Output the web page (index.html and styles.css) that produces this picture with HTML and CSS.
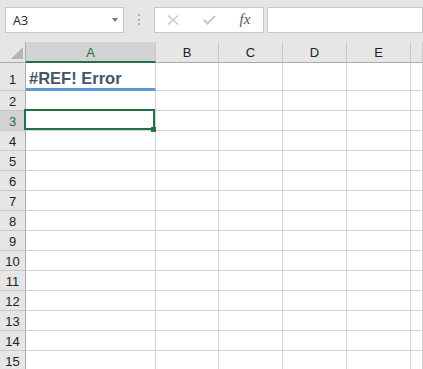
FILE: index.html
```html
<!DOCTYPE html>
<html lang="en">
<head>
    <meta charset="UTF-8">
    <meta name="viewport" content="width=device-width, initial-scale=1.0">
    <title>#REF! Error</title>
    <link rel="stylesheet" href="styles.css">
</head>
<body>

    <div class="toolbar">
        <div class="name-box">
            <span>A3</span>
            <span class="drop"></span>
        </div>
        <div class="grip"><i></i><i></i><i></i></div>
        <div class="fx-bar">
            <span class="fx-btn">
                <svg width="12" height="10" viewBox="0 0 12 10"><path d="M1 0.5 L11 9.5 M11 0.5 L1 9.5" stroke="#c3c3c3" stroke-width="1.2" fill="none"/></svg>
            </span>
            <span class="fx-btn">
                <svg width="13" height="10" viewBox="0 0 13 10"><path d="M1 5 L4.5 8.5 L12 1" stroke="#c6c6c6" stroke-width="2" fill="none"/></svg>
            </span>
            <span class="fx-btn fx">fx</span>
        </div>
        <div class="formula"></div>
    </div>

    <div class="sheet">
        <!-- column headers -->
        <div class="corner"><span class="tri"></span></div>
        <div class="col-head active">A</div>
        <div class="col-head">B</div>
        <div class="col-head">C</div>
        <div class="col-head">D</div>
        <div class="col-head">E</div>
        <div class="col-head"></div>

        <div class="row-head tall">1</div>
        <div class="cell title-cell">#REF! Error</div>
        <div class="cell"></div><div class="cell"></div><div class="cell"></div><div class="cell"></div><div class="cell"></div>

        <div class="row-head">2</div>
        <div class="cell"></div><div class="cell"></div><div class="cell"></div><div class="cell"></div><div class="cell"></div><div class="cell"></div>

        <div class="row-head active">3</div>
        <div class="cell selected"></div><div class="cell"></div><div class="cell"></div><div class="cell"></div><div class="cell"></div><div class="cell"></div>

        <div class="row-head">4</div>
        <div class="cell"></div><div class="cell"></div><div class="cell"></div><div class="cell"></div><div class="cell"></div><div class="cell"></div>

        <div class="row-head">5</div>
        <div class="cell"></div><div class="cell"></div><div class="cell"></div><div class="cell"></div><div class="cell"></div><div class="cell"></div>

        <div class="row-head">6</div>
        <div class="cell"></div><div class="cell"></div><div class="cell"></div><div class="cell"></div><div class="cell"></div><div class="cell"></div>

        <div class="row-head">7</div>
        <div class="cell"></div><div class="cell"></div><div class="cell"></div><div class="cell"></div><div class="cell"></div><div class="cell"></div>

        <div class="row-head">8</div>
        <div class="cell"></div><div class="cell"></div><div class="cell"></div><div class="cell"></div><div class="cell"></div><div class="cell"></div>

        <div class="row-head">9</div>
        <div class="cell"></div><div class="cell"></div><div class="cell"></div><div class="cell"></div><div class="cell"></div><div class="cell"></div>

        <div class="row-head">10</div>
        <div class="cell"></div><div class="cell"></div><div class="cell"></div><div class="cell"></div><div class="cell"></div><div class="cell"></div>

        <div class="row-head">11</div>
        <div class="cell"></div><div class="cell"></div><div class="cell"></div><div class="cell"></div><div class="cell"></div><div class="cell"></div>

        <div class="row-head">12</div>
        <div class="cell"></div><div class="cell"></div><div class="cell"></div><div class="cell"></div><div class="cell"></div><div class="cell"></div>

        <div class="row-head">13</div>
        <div class="cell"></div><div class="cell"></div><div class="cell"></div><div class="cell"></div><div class="cell"></div><div class="cell"></div>

        <div class="row-head">14</div>
        <div class="cell"></div><div class="cell"></div><div class="cell"></div><div class="cell"></div><div class="cell"></div><div class="cell"></div>

        <div class="row-head">15</div>
        <div class="cell"></div><div class="cell"></div><div class="cell"></div><div class="cell"></div><div class="cell"></div><div class="cell"></div>
    </div>

</body>
</html>
```

FILE: styles.css
```css
* {
    box-sizing: border-box;
}
body {
    margin: 0;
    width: 423px;
    height: 369px;
    overflow: hidden;
    background-color: #e6e6e6;
    font-family: "Liberation Sans", Arial, sans-serif;
    color: #222;
}

/* formula bar */
.toolbar {
    display: flex;
    height: 42px;
    padding: 7px 0 0 5px;
}
.name-box {
    width: 119px;
    height: 26px;
    border: 1px solid #c6c6c6;
    background-color: #fff;
    display: flex;
    align-items: center;
    justify-content: space-between;
    padding: 0 5px 0 7px;
    font-family: "Open Sans", sans-serif;
    font-size: 12.5px;
    color: #222;
}
.drop {
    width: 0;
    height: 0;
    border-left: 3.5px solid transparent;
    border-right: 3.5px solid transparent;
    border-top: 4px solid #777;
}
.grip {
    width: 30px;
    display: flex;
    flex-direction: column;
    align-items: center;
    gap: 2.5px;
    padding-top: 7px;
}
.grip i {
    width: 2px;
    height: 2px;
    background-color: #b0b0b0;
}
.fx-bar {
    width: 110px;
    height: 26px;
    border: 1px solid #c6c6c6;
    background-color: #fff;
    display: flex;
    align-items: center;
}
.fx-btn {
    width: 36px;
    display: flex;
    justify-content: center;
    align-items: center;
}
.fx {
    font-family: "Liberation Serif", "Times New Roman", serif;
    font-style: italic;
    font-size: 15px;
    color: #555;
    padding-bottom: 2px;
}
.formula {
    flex: 1;
    height: 26px;
    margin-left: 3px;
    border: 1px solid #c6c6c6;
    background-color: #fff;
}

/* sheet grid */
.sheet {
    display: grid;
    grid-template-columns: 26px 130px 63px 64px 64px 64px minmax(0, 1fr);
    grid-template-rows: 21px 28px;
    grid-auto-rows: 20px;
    background-color: #fff;
    font-size: 13px;
}
.corner {
    background-color: #e6e6e6;
    border-right: 1px solid #ababab;
    border-bottom: 1px solid #ababab;
    display: flex;
    justify-content: flex-end;
    align-items: flex-end;
    padding: 0 2px 3px 0;
}
.tri {
    width: 12px;
    height: 12px;
    background-color: #b4b4b4;
    clip-path: polygon(100% 0, 100% 100%, 0 100%);
}
.col-head {
    background-color: #e6e6e6;
    border-right: 1px solid #c8c8c8;
    border-bottom: 1px solid #ababab;
    display: flex;
    justify-content: center;
    align-items: center;
    padding-top: 1px;
}
.col-head.active {
    background-color: #d2d2d2;
    color: #217346;
    border-bottom: 2px solid #217346;
    padding-top: 2px;
}
.row-head {
    background-color: #e6e6e6;
    border-right: 1px solid #ababab;
    border-bottom: 1px solid #c8c8c8;
    display: flex;
    justify-content: center;
    align-items: center;
    padding-top: 2px;
}
.row-head.tall {
    padding-top: 5px;
}
.row-head.active {
    background-color: #d2d2d2;
    color: #217346;
}
.cell {
    border-right: 1px solid #d4d4d4;
    border-bottom: 1px solid #d4d4d4;
}
.title-cell {
    border-bottom: 3px solid #5b9bd5;
    display: flex;
    align-items: flex-end;
    padding: 0 3px;
    font-size: 16.5px;
    line-height: 19px;
    font-weight: bold;
    color: #44546a;
    white-space: nowrap;
}

/* active cell outline + fill handle */
.selected {
    position: relative;
}
.selected::before {
    content: "";
    position: absolute;
    left: -2px;
    top: -2px;
    right: 0;
    bottom: 0;
    border: 2px solid #217346;
}
.selected::after {
    content: "";
    position: absolute;
    right: -1px;
    bottom: -2px;
    width: 5px;
    height: 5px;
    background-color: #217346;
}
```
